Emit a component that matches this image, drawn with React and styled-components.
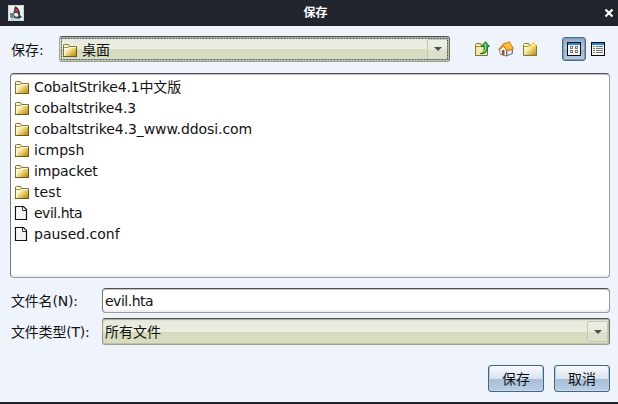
import React from 'react';
import styled, { createGlobalStyle } from 'styled-components';

const Global = createGlobalStyle`
  * { box-sizing: border-box; }
  body { margin: 0; background: #eff3fb; overflow: hidden; }
  svg { display: block; flex: none; }
`;
const Dialog = styled.div`
  width: 618px; height: 404px; display: flex; flex-direction: column;
  background: #eff3fb; border-bottom: 2px solid #23252e; color: #111;
  font: 14px/20px "DejaVu Sans", "Noto Sans CJK SC", sans-serif;
`;
const TitleBar = styled.header`
  height: 26px; flex: none; display: grid; grid-template-columns: 40px 1fr 40px;
  align-items: center; padding: 0 4px 1px 8px; background: #23252e; color: #fff;
`;
const Title = styled.h1`
  margin: 0; padding: 0 0 2px 9px; text-align: center;
  font: bold 12px/16px "Noto Sans CJK SC", sans-serif;
`;
const CloseButton = styled.button`
  justify-self: end; border: 0; padding: 0; background: none; color: #fff;
`;
const LocationRow = styled.div`
  height: 26px; margin-top: 10px; flex: none; display: flex; align-items: center; padding: 0 9px 0 11px;
`;
const LocationLabel = styled.label` width: 48px; flex: none; padding-top: 1px; `;
const Combo = styled.div`
  position: relative; width: ${p => p.$width}px; height: ${p => p.$height}px; flex: none;
  display: flex; align-items: center; justify-content: space-between; padding: 2px 1px 2px 2px;
  border: 1px solid #9ca08c; border-top-color: #50524a; border-right-color: #6c7060;
  border-radius: 3px;
  box-shadow: inset 0 1px 1px #a8ab9c, inset -1px -1px 0 #bdc3a5;
  background: linear-gradient(#e6e9dc 0, #eceee1 50%, #d6dbbd 51%, #d9dec3 100%);
`;
const FocusRing = styled.svg` position: absolute; left: 1px; top: 1px; pointer-events: none; `;
const ComboValue = styled.span` display: flex; align-items: center; gap: 4px; padding-top: 1px; `;
const ComboArrow = styled.span`
  width: 21px; height: 21px; display: flex; align-items: center; justify-content: center;
  border: 1px solid #c4c8b5; border-radius: 2px;
  background: linear-gradient(#edf0e5 0, #e7eadb 50%, #dce0ca 51%, #dce0ca 100%);
`;
const Tools = styled.div` display: flex; align-items: center; margin-left: 24px; gap: 8px; `;
const ViewTools = styled.div` display: flex; align-items: center; gap: 4px; margin-left: 24px; `;
const ToolButton = styled.button`
  width: ${p => (p.$active ? 24 : 16)}px; height: 24px; padding: 0; display: flex;
  align-items: center; justify-content: center; border-radius: 3px;
  border: ${p => (p.$active ? '1px solid #496b8c' : '0')};
  box-shadow: ${p => (p.$active ? 'inset 0 0 1px 1px #7897b5' : 'none')};
  background: ${p => (p.$active ? 'linear-gradient(#91a9c2, #b8cade 50%, #9bb4cf 55%, #b9cfe3)' : 'none')};
`;
const FileList = styled.ul`
  height: 205px; flex: none; margin: 11px 8px 0 10px; padding: 2px 3px; list-style: none;
  background: #fff; border: 1px solid #989ba0; border-top-color: #505257; border-left-color: #74777b;
  border-radius: 4px; box-shadow: inset 0 1px 0 #bfc1c4, inset 0 -2px 0 #efefef;
`;
const FileRow = styled.li`
  display: flex; align-items: center; gap: 4px; height: 21px; white-space: nowrap;
  letter-spacing: ${p => p.$tracking}px;
`;
const FieldRow = styled.div`
  display: flex; align-items: center; flex: none; padding: 0 8px 0 11px; margin-top: ${p => p.$gap}px;
`;
const FieldLabel = styled.label`
  width: 91px; flex: none; white-space: nowrap; letter-spacing: -.2px;
`;
const TextField = styled.input`
  width: 508px; height: 25px; padding: 1px 2px 0; background: #fff; color: #111;
  font: 14px/20px "DejaVu Sans", "Noto Sans CJK SC", sans-serif; letter-spacing: -.5px;
  border: 1px solid #989ba0; border-top-color: #505257; border-left-color: #74777b;
  border-radius: 4px; outline: 0; box-shadow: inset 0 1px 0 #bfc1c4, inset 0 -2px 0 #efefef;
`;
const Actions = styled.footer`
  display: flex; justify-content: flex-end; gap: 10px; margin-top: 20px; padding-right: 8px;
`;
const ActionButton = styled.button`
  width: 56px; height: 27px; padding: 0; color: #111; border: 1px solid #416582; border-radius: 3px;
  font: 14px/20px "DejaVu Sans", "Noto Sans CJK SC", sans-serif;
  box-shadow: inset 1px 0 0 #b7c9dc, inset -1px 0 0 #b7c9dc, inset 0 -1px 0 #c7daeb;
  background: linear-gradient(#f8fafd 0, #d8e3ee 52%, #a9bed8 54%, #b6cee5 100%);
`;

const Folder = () => (
  <svg width="16" height="16" viewBox="0 0 16 16">
    <defs>
      <linearGradient id="folderGold" x1="0" y1="0" x2="1" y2="1">
        <stop offset="0" stopColor="#fffce0" /><stop offset=".4" stopColor="#f7eeb7" />
        <stop offset=".65" stopColor="#dfc154" /><stop offset="1" stopColor="#b08010" />
      </linearGradient>
    </defs>
    <path d="M1.5 14.5V3L2.5 2.5H6.5L7.5 4.5H14.5V14.5Z" fill="url(#folderGold)" stroke="#85743a" />
    <path d="M2.5 14V6.5H6.5L8 5.5H14" fill="none" stroke="#fffbd8" />
    <path d="M2 5.5H6L7.5 4.5" fill="none" stroke="#a99441" />
    <path d="M1 14.5H14.5V5" fill="none" stroke="#735714" />
  </svg>
);
const FileIcon = () => (
  <svg width="16" height="16" viewBox="0 0 16 16">
    <path d="M1.5 1.5H9.5L12.5 4.5V14.5H1.5Z" fill="#f4f4f4" stroke="#111" strokeWidth="1.2" />
    <path d="M8.5 2V5.5H12" fill="#fff" stroke="#333" /><path d="M3 13V3H7" fill="none" stroke="#fff" />
  </svg>
);
const Arrow = () => <svg width="8" height="4" viewBox="0 0 8 4"><path d="M0 0H8L4 4Z" fill="#4d4e4c" /></svg>;
const UpFolder = () => (
  <svg width="16" height="16" viewBox="0 0 16 16">
    <path d="M1.5 14.5V3.5L2.5 2.5H6.5L7.5 4.5H13.5V14.5Z" fill="#f4e9a5" stroke="#85743a" />
    <path d="M2 5.5H6L8 4.5" fill="none" stroke="#a99441" />
    <path d="M6 12.5C9.5 12.5 10.5 9.5 10 5.5H7L11.5 .7L15.5 5.5H13.3C14 10.5 11 13.5 6 12.5Z" fill="#42b956" stroke="#126326" strokeWidth=".9" />
    <path d="M11.5 3V8L10 11" fill="none" stroke="#91e39c" />
  </svg>
);
const HomeIcon = () => (
  <svg width="16" height="16" viewBox="0 0 16 16">
    <path d="M1.5 9L5.5 5L8.5 9V15L2.5 13.5Z" fill="#fff" stroke="#777" strokeWidth=".9" />
    <path d="M8.5 9.5L13.5 8L14.5 8.5V12.5L8.5 15Z" fill="#c9c9c9" stroke="#666" strokeWidth=".9" />
    <path d="M3.8 9H6.5V14.5L3.8 13.7Z" fill="#94552d" />
    <path d="M10.5 10.2H13V12.2L10.5 13Z" fill="#fff" />
    <path d="M.5 8.5L5.5 2.5L11 1.2L15.5 7L14.5 8.5L9 9.5L5.3 5L1.5 9Z" fill="#f8aa21" stroke="#b97516" strokeWidth=".8" />
    <path d="M6 4L10.5 2.3L14.2 7L9.5 8.2Z" fill="#ffc238" /><path d="M10.5 .5H12.5V3L11 2.5Z" fill="#d99b39" />
  </svg>
);
const NewFolder = () => (
  <svg width="16" height="16" viewBox="0 0 16 16">
    <path d="M1.5 14.5V3.5L2.5 2.5H6.5L7.5 4.5H14.5V14.5Z" fill="url(#folderGold)" stroke="#85743a" />
    <path d="M1.5 5.5H6.5L8 4.5" fill="none" stroke="#a99441" />
    <path d="M2.5 6.5H6.5L8 5.5" fill="none" stroke="#fff5a5" />
    <path d="M11.5 1.2L12.5 3.5L15 4.5L12.5 5.5L11.5 7.8L10.5 5.5L8 4.5L10.5 3.5Z" fill="#ffdb3c" stroke="#efb52b" strokeWidth=".7" />
    <rect x="10.5" y="3.5" width="2" height="2" fill="#fffbd0" />
  </svg>
);
const ViewIcon = ({ details }) => (
  <svg width="14" height="14" viewBox="0 0 14 14" shapeRendering="crispEdges">
    <rect width="14" height="14" fill="#080808" /><rect x="1" y="1" width="12" height="2" fill="#1689e1" />
    <rect x="1" y="3" width="12" height="10" fill="#f8f8f4" />
    {details ? <path d="M2 4.5H4M5 4.5H12M2 6.5H4M5 6.5H12M2 8.5H4M5 8.5H12M2 10.5H4M5 10.5H12" stroke="#777" />
      : <path d="M3.5 4.5H5.5V6.5H3.5ZM8.5 4.5H10.5V6.5H8.5ZM3.5 8.5H5.5V10.5H3.5ZM8.5 8.5H10.5V10.5H8.5Z" fill="#fff" stroke="#777" />}
  </svg>
);
const JavaIcon = () => (
  <svg width="16" height="16" viewBox="0 0 16 16">
    <rect width="16" height="16" fill="#c4d6df" /><rect x="1" y="1" width="14" height="14" fill="#eef1f1" />
    <path d="M7 1L10 3L12 7V10L14 12L11 14L6 13L5 10L6 5Z" fill="#34444b" />
    <path d="M2 8H5L6 11L4 14L2 12Z" fill="#718389" />
    <path d="M6.5 8H9.5L10.5 11L8 12L6 10Z" fill="#f7f7f7" />
    <circle cx="8.5" cy="5.5" r="1.8" fill="#d72d2b" />
    <path d="M3 14H12" stroke="#a9bac2" />
  </svg>
);
const files = [
  { name: 'CobaltStrike4.1中文版', tracking: -.15 },
  { name: 'cobaltstrike4.3', tracking: -.13 },
  { name: 'cobaltstrike4.3_www.ddosi.com', tracking: -.08 },
  { name: 'icmpsh', tracking: 0 },
  { name: 'impacket', tracking: -.1 },
  { name: 'test', tracking: .1 },
  { name: 'evil.hta', tracking: -.5, document: true },
  { name: 'paused.conf', tracking: 0, document: true },
];

export default function App() {
  return (
    <Dialog>
      <Global />
      <TitleBar>
        <JavaIcon /><Title>保存</Title>
        <CloseButton aria-label="关闭"><svg width="10" height="10" viewBox="0 0 10 10"><path d="M1.5 1.5L8.5 8.5M8.5 1.5L1.5 8.5" stroke="#fff" strokeWidth="2.2" /></svg></CloseButton>
      </TitleBar>
      <LocationRow>
        <LocationLabel>保存:</LocationLabel>
        <Combo $width={391} $height={26}>
          <ComboValue><Folder />桌面</ComboValue><ComboArrow><Arrow /></ComboArrow>
          <FocusRing width="387" height="22"><rect x=".5" y=".5" width="386" height="21" fill="none" stroke="#405f7b" strokeDasharray="2 1" /></FocusRing>
        </Combo>
        <Tools>
          <ToolButton aria-label="向上"><UpFolder /></ToolButton>
          <ToolButton aria-label="主目录"><HomeIcon /></ToolButton>
          <ToolButton aria-label="新建文件夹"><NewFolder /></ToolButton>
        </Tools>
        <ViewTools>
          <ToolButton $active aria-label="列表"><ViewIcon /></ToolButton>
          <ToolButton aria-label="详细信息"><ViewIcon details /></ToolButton>
        </ViewTools>
      </LocationRow>
      <FileList>
        {files.map(file => (
          <FileRow key={file.name} $tracking={file.tracking}>
            {file.document ? <FileIcon /> : <Folder />}{file.name}
          </FileRow>
        ))}
      </FileList>
      <FieldRow $gap={10}><FieldLabel>文件名(N):</FieldLabel><TextField defaultValue="evil.hta" /></FieldRow>
      <FieldRow $gap={5}>
        <FieldLabel>文件类型(T):</FieldLabel>
        <Combo $width={508} $height={27}><ComboValue>所有文件</ComboValue><ComboArrow><Arrow /></ComboArrow></Combo>
      </FieldRow>
      <Actions><ActionButton>保存</ActionButton><ActionButton>取消</ActionButton></Actions>
    </Dialog>
  );
}
